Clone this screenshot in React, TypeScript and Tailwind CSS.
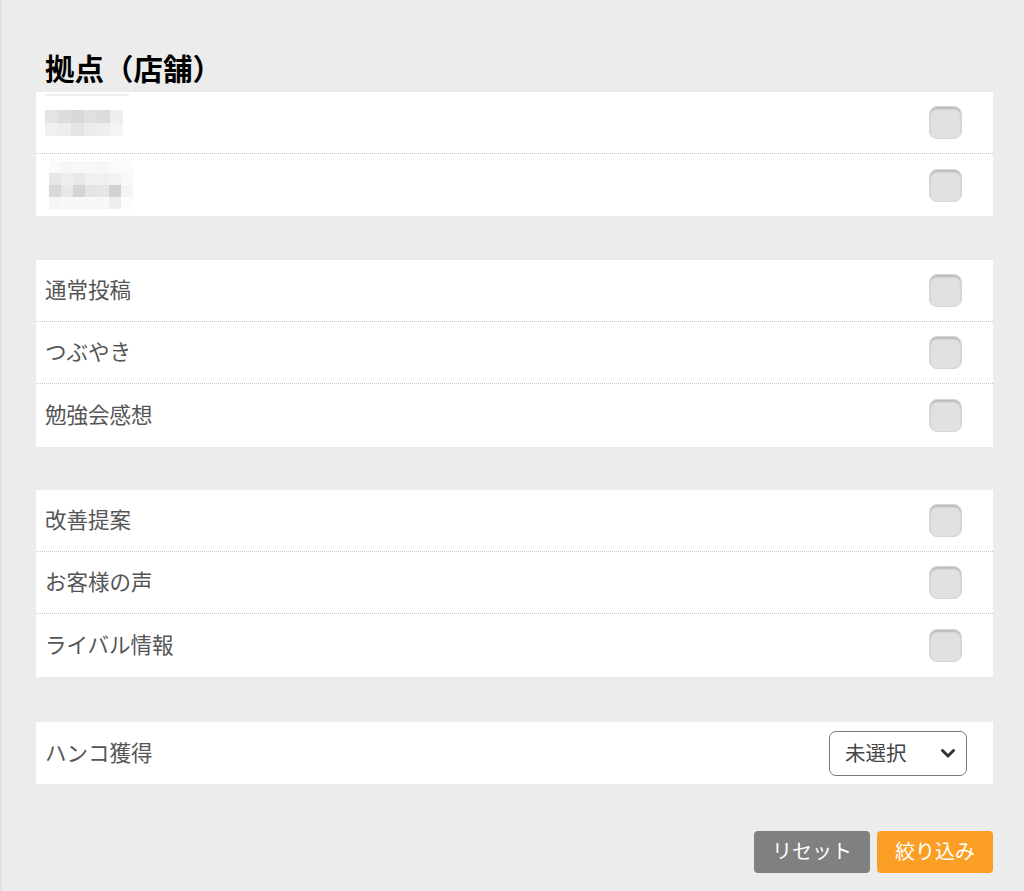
import React from "react";

const font = { fontFamily: '"Noto Sans CJK JP", "Noto Sans", sans-serif' };

function Checkbox() {
  return (
    <div className="w-[33px] h-[33px] rounded-[8px] bg-[#e1e1e1] border border-[#d6d6d6] shadow-[inset_0_2px_2px_rgba(0,0,0,0.18)]" />
  );
}

function Row({ label, last, tall, children }: { label?: React.ReactNode; last?: boolean; tall?: boolean; children?: React.ReactNode }) {
  return (
    <div
      className={
        (tall ? "h-[63px] " : "h-[62px] ") +
        "box-border flex items-center justify-between pl-[9px] pr-[31px] " +
        (last ? "" : "border-b border-dotted border-[#c4c4c4]")
      }
    >
      <div className="text-[21.5px] text-[#555] leading-none mb-[3px]">{label}</div>
      {children ?? <Checkbox />}
    </div>
  );
}

const blur1 = [
  ["#e4e4e4", "#dcdcdc", "#d8d8d8", "#e0e0e0", "#dcdcdc", "#eeeeee"],
  ["#f0f0f0", "#eeeeee", "#e4e4e4", "#ececec", "#eeeeee", "#f4f4f4"],
];
const blur2 = [
  ["#fafafa", "#f6f6f6", "#f8f8f8", "#f8f8f8", "#f6f6f6", "#fafafa", "#fbfbfb"],
  ["#e6e6e6", "#eeeeee", "#e8e8e8", "#f0f0f0", "#f0f0f0", "#f2f2f2", "#f8f8f8"],
  ["#d8d8d8", "#e8e8e8", "#d4d4d4", "#e4e4e4", "#e6e6e6", "#d2d2d2", "#f4f4f4"],
  ["#f6f6f6", "#f8f8f8", "#f8f8f8", "#f8f8f8", "#f8f8f8", "#eeeeee", "#fcfcfc"],
];

function Pix({ grid, cell }: { grid: string[][]; cell: number }) {
  return (
    <div className="flex flex-col">
      {grid.map((r, i) => (
        <div key={i} className="flex">
          {r.map((c, j) => (
            <div key={j} style={{ width: cell, height: cell, background: c }} />
          ))}
        </div>
      ))}
    </div>
  );
}

export default function App() {
  return (
    <div style={font} className="w-[1024px] h-[891px] bg-[#ececec] border-l-[2px] border-[#e2e2e2] box-border">
      <div className="pl-[34px] pr-[31px] pt-[50px]">
        <h1 className="text-[29.5px] leading-[34px] pb-[8px] pl-[9px] font-bold text-black">拠点（店舗）</h1>

        <div className="bg-white relative">
          <div className="absolute left-[9px] top-[2px] w-[84px] h-[2px] bg-[#eeeeee]" />
          <Row label={<div className="mt-[3px]"><Pix grid={blur1} cell={13} /></div>} />
          <Row last label={<div className="pl-[4px] mt-[3px]"><Pix grid={blur2} cell={12} /></div>} />
        </div>

        <div className="bg-white mt-[44px]">
          <Row label="通常投稿" />
          <Row label="つぶやき" />
          <Row last tall label="勉強会感想" />
        </div>

        <div className="bg-white mt-[43px]">
          <Row label="改善提案" />
          <Row label="お客様の声" />
          <Row last tall label="ライバル情報" />
        </div>

        <div className="bg-white mt-[45px]">
          <Row last label="ハンコ獲得">
            <div className="mr-[-5px] w-[138px] h-[45px] box-border border-[1.5px] border-[#7a7a7a] rounded-[7px] flex items-center justify-between pl-[15px] pr-[10px]">
              <span className="text-[20.5px] text-[#444] leading-none mb-[2px]">未選択</span>
              <svg width="16" height="12" viewBox="0 0 16 12">
                <path d="M2.5 3.5 L8 9 L13.5 3.5" fill="none" stroke="#333" strokeWidth="3" strokeLinecap="round" strokeLinejoin="round" />
              </svg>
            </div>
          </Row>
        </div>

        <div className="flex justify-end gap-[7px] mt-[47px]">
          <button className="w-[116px] h-[42px] rounded-[4px] bg-[#808080] text-white text-[20px] leading-none pb-[2px]">リセット</button>
          <button className="w-[116px] h-[42px] rounded-[4px] bg-[#fb9e25] text-white text-[20px] leading-none pb-[2px]">絞り込み</button>
        </div>
      </div>
    </div>
  );
}
